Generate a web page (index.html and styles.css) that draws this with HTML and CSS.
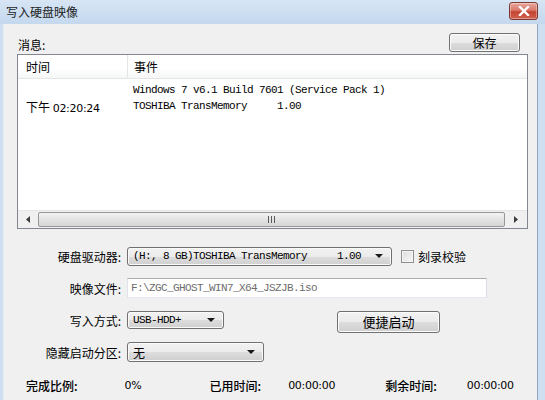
FILE: index.html
```html
<!DOCTYPE html>
<html lang="zh-CN">
<head>
    <meta charset="UTF-8">
    <title>写入硬盘映像</title>
    <link rel="stylesheet" href="styles.css">
</head>
<body>

    <div class="window">
        <div class="titlebar">
            <span class="title">写入硬盘映像</span>
            <button class="close">
                <svg width="12" height="10" viewBox="0 0 12 10"><path d="M2 1 L10 9 M10 1 L2 9" stroke="#fff" stroke-width="2.4" stroke-linecap="square"/></svg>
            </button>
        </div>

        <div class="frame">
            <div class="client">
                <div class="msg-row">
                    <span class="msg-label">消息:</span>
                    <button class="btn save">保存</button>
                </div>

                <div class="listview">
                    <div class="lv-head">
                        <div class="col-time">时间</div>
                        <div class="col-event">事件</div>
                    </div>
                    <div class="lv-body">
                        <div class="lv-row">
                            <div class="col-time"></div>
                            <div class="col-event mono">Windows 7 v6.1 Build 7601 (Service Pack 1)</div>
                        </div>
                        <div class="lv-row">
                            <div class="col-time">下午 <span class="tahoma">02:20:24</span></div>
                            <div class="col-event mono">TOSHIBA TransMemory     1.00</div>
                        </div>
                    </div>
                    <div class="hscroll">
                        <div class="sb-btn">
                            <svg width="4" height="7" viewBox="0 0 4 7"><path d="M4 0 L0 3.5 L4 7 Z" fill="#3c3c3c"/></svg>
                        </div>
                        <div class="sb-thumb">
                            <svg width="7" height="7" viewBox="0 0 7 7"><path d="M0.5 0 V7 M3.5 0 V7 M6.5 0 V7" stroke="#5a5a5a" stroke-width="1"/></svg>
                        </div>
                        <div class="sb-btn">
                            <svg width="4" height="7" viewBox="0 0 4 7"><path d="M0 0 L4 3.5 L0 7 Z" fill="#3c3c3c"/></svg>
                        </div>
                    </div>
                </div>

                <div class="form">
                    <div class="form-row">
                        <label class="form-label">硬盘驱动器:</label>
                        <div class="combo drive">
                            <span class="mono">(H:, 8 GB)TOSHIBA TransMemory     1.00</span>
                            <span class="arrow"></span>
                        </div>
                        <label class="check"><span class="box"></span>刻录校验</label>
                    </div>
                    <div class="form-row">
                        <label class="form-label">映像文件:</label>
                        <div class="textbox mono">F:\ZGC_GHOST_WIN7_X64_JSZJB.iso</div>
                    </div>
                    <div class="form-row">
                        <label class="form-label">写入方式:</label>
                        <div class="combo mode">
                            <span class="mono">USB-HDD+</span>
                            <span class="arrow"></span>
                        </div>
                        <button class="btn quick">便捷启动</button>
                    </div>
                    <div class="form-row">
                        <label class="form-label">隐藏启动分区:</label>
                        <div class="combo hidden-part">
                            <span>无</span>
                            <span class="arrow"></span>
                        </div>
                    </div>
                </div>

                <div class="status">
                    <span class="st-label st-done">完成比例:</span>
                    <span class="st-value st-pct">0%</span>
                    <span class="st-label st-used">已用时间:</span>
                    <span class="st-value st-time">00:00:00</span>
                    <span class="st-label st-left">剩余时间:</span>
                    <span class="st-value st-time">00:00:00</span>
                </div>
            </div>
        </div>
    </div>

</body>
</html>
```

FILE: styles.css
```css
/* Window frame */
body {
    margin: 0;
    padding: 0;
    font-family: "Noto Sans CJK SC", "Liberation Sans", sans-serif;
    font-size: 12px;
    color: #000;
    background: #cfdff0;
}

.window {
    width: 545px;
    height: 400px;
    display: flex;
    flex-direction: column;
    overflow: hidden;
    background: #cfdff0;
}

.titlebar {
    height: 24px;
    flex: none;
    display: flex;
    align-items: center;
    justify-content: space-between;
    background: linear-gradient(#d7e5f4, #c4d8ee);
    padding: 0 7px 0 6px;
}

.title {
    font-size: 12px;
    line-height: 14px;
    color: #1e1e1e;
}

.close {
    width: 29px;
    height: 18px;
    margin-top: -2px;
    border: 1px solid #7b3a32;
    border-radius: 3px;
    background: linear-gradient(#e8a99f 0%, #d9796b 45%, #c54433 55%, #d0604d 100%);
    display: flex;
    align-items: center;
    justify-content: center;
    padding: 0;
    box-shadow: inset 0 0 0 1px rgba(255, 255, 255, 0.35);
}

.frame {
    flex: 1;
    display: flex;
    padding-left: 3px;
    padding-right: 7px;
}

.client {
    flex: 1;
    background: #f0f0f0;
    border-left: 1px solid #e3ebf4;
    border-right: 1px solid #8fa8c4;
    padding-left: 13px;
    display: flex;
    flex-direction: column;
}

/* Buttons */
.btn {
    font-family: "Noto Sans CJK SC", sans-serif;
    font-size: 12px;
    color: #000;
    border: 1px solid #707070;
    border-radius: 3px;
    background: linear-gradient(#f2f2f2 0%, #ebebeb 50%, #dddddd 51%, #cfcfcf 100%);
    box-shadow: inset 0 0 0 1px #fcfcfc;
    padding: 0;
    line-height: 16px;
}

.msg-row {
    display: flex;
    justify-content: space-between;
    align-items: flex-end;
    height: 30px;
    padding-right: 17px;
}

.msg-label {
    line-height: 16px;
    padding-left: 1px;
    padding-bottom: 1px;
}

.save {
    width: 71px;
    height: 19px;
    margin-bottom: 2px;
}

/* List view */
.listview {
    width: 509px;
    height: 173px;
    border: 1px solid #828790;
    background: #fff;
    display: flex;
    flex-direction: column;
}

.lv-head {
    height: 23px;
    display: flex;
    align-items: center;
    background: linear-gradient(#ffffff 0%, #ffffff 60%, #f5f6f7 100%);
    border-bottom: 1px solid #e5e5e5;
}

.lv-head .col-time {
    border-right: 1px solid #e3e5e8;
    height: 23px;
    line-height: 23px;
}

.col-time {
    width: 101px;
    padding-left: 8px;
    flex: none;
}

.col-event {
    padding-left: 6px;
}

.lv-body {
    flex: 1;
    padding-top: 3px;
}

.lv-row {
    display: flex;
    height: 16px;
    align-items: center;
}

.mono {
    font-family: "Liberation Mono", monospace;
    font-size: 11px;
    letter-spacing: -0.6px;
    white-space: pre;
}

.tahoma {
    font-family: "DejaVu Sans", sans-serif;
    font-size: 11px;
    letter-spacing: -0.3px;
}

.hscroll {
    height: 17px;
    display: flex;
    background: #f0f0f0;
    border-top: 1px solid #e6e6e6;
}

.sb-btn {
    width: 20px;
    display: flex;
    align-items: center;
    justify-content: center;
    background: #f0f0f0;
}

.sb-thumb {
    flex: 1;
    margin: 1px 0;
    border: 1px solid #979797;
    border-radius: 2px;
    background: linear-gradient(#f3f3f3, #e3e3e3 50%, #d6d6d6);
    display: flex;
    align-items: center;
    justify-content: center;
}

.sb-thumb + .sb-btn {
    width: 22px;
}

/* Form */
.form {
    margin-top: 17px;
    display: flex;
    flex-direction: column;
    gap: 12px;
}

.form-row {
    display: flex;
    align-items: center;
    height: 20px;
}

.form-label {
    width: 104px;
    text-align: right;
    padding-right: 6px;
    flex: none;
}

.combo {
    height: 18px;
    border: 1px solid #707070;
    border-radius: 3px;
    background: linear-gradient(#f2f2f2 0%, #ebebeb 50%, #dddddd 51%, #cfcfcf 100%);
    box-shadow: inset 0 0 0 1px #fafafa;
    display: flex;
    align-items: center;
    justify-content: space-between;
    padding: 0 8px 0 5px;
    box-sizing: border-box;
}

.arrow {
    width: 0;
    height: 0;
    border-left: 4px solid transparent;
    border-right: 4px solid transparent;
    border-top: 4px solid #1a1a1a;
}

.drive {
    width: 265px;
    height: 19px;
}

.mode {
    width: 97px;
}

.hidden-part {
    width: 137px;
    height: 20px;
}

.check {
    display: flex;
    align-items: center;
    margin-left: 9px;
    gap: 4px;
}

.box {
    width: 11px;
    height: 11px;
    border: 1px solid #8e8f8f;
    background: linear-gradient(135deg, #dcdcdc, #f7f7f7);
    box-shadow: inset 0 0 0 1px #f4f4f4;
}

.textbox {
    width: 360px;
    height: 20px;
    box-sizing: border-box;
    border: 1px solid #abadb3;
    border-color: #abadb3 #dbdfe6 #e3e9ef #e2e3ea;
    background: #fff;
    color: #6d6d6d;
    padding-left: 3px;
    line-height: 18px;
}

.quick {
    width: 103px;
    height: 22px;
    margin-left: 113px;
    margin-top: 3px;
    font-size: 13px;
}

/* Status line */
.status {
    margin-top: 13px;
    display: flex;
    align-items: center;
    height: 20px;
    padding-left: 9px;
}

.st-label {
    font-weight: 500;
}

.st-value {
    font-family: "DejaVu Sans", sans-serif;
    font-size: 11px;
    letter-spacing: -0.3px;
}

.st-pct {
    margin-left: 47px;
    width: 85px;
}

.st-time {
    margin-left: 27px;
    width: 49px;
}

.st-time + .st-left {
    margin-left: 48px;
}

.st-left + .st-time {
    margin-left: 30px;
}
```
